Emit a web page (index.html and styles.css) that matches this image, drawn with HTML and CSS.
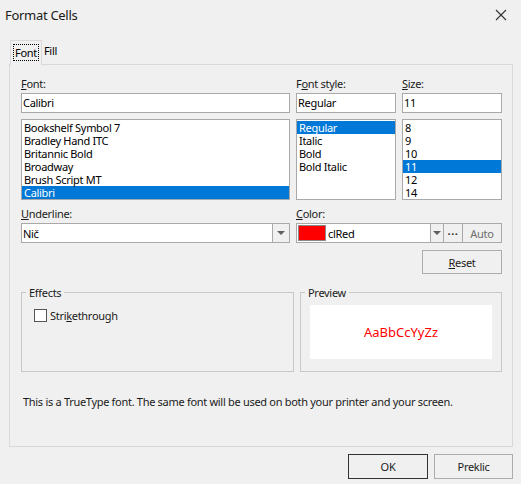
FILE: index.html
```html
<!DOCTYPE html>
<html lang="en">
  <head>
    <meta charset="UTF-8" />
    <meta name="viewport" content="width=device-width, initial-scale=1.0" />
    <title>Format Cells</title>
    <link rel="stylesheet" href="styles.css">
  </head>
  <body>
    <div class="window">
      <div class="titlebar">
        <span class="title">Format Cells</span>
        <svg class="close" width="12" height="12" viewBox="0 0 12 12">
          <path d="M1 1 L11 11 M11 1 L1 11" stroke="#333" stroke-width="1.1" fill="none" />
        </svg>
      </div>

      <div class="tabs">
        <div class="tab active"><span class="focus">Font</span></div>
        <div class="tab">Fill</div>
      </div>

      <div class="panel">
        <div class="fields">
          <div class="col">
            <label><u>F</u>ont:</label>
            <div class="edit">Calibri</div>
            <ul class="list">
              <li>Bookshelf Symbol 7</li>
              <li>Bradley Hand ITC</li>
              <li>Britannic Bold</li>
              <li>Broadway</li>
              <li>Brush Script MT</li>
              <li class="selected">Calibri</li>
            </ul>
          </div>

          <div class="col">
            <label>F<u>o</u>nt style:</label>
            <div class="edit">Regular</div>
            <ul class="list">
              <li class="selected">Regular</li>
              <li>Italic</li>
              <li>Bold</li>
              <li>Bold Italic</li>
            </ul>
          </div>

          <div class="col">
            <label><u>S</u>ize:</label>
            <div class="edit">11</div>
            <ul class="list">
              <li>8</li>
              <li>9</li>
              <li>10</li>
              <li class="selected">11</li>
              <li>12</li>
              <li>14</li>
            </ul>
          </div>

          <div class="col row2">
            <label><u>U</u>nderline:</label>
            <div class="combo">
              <span class="value">Nič</span>
              <span class="drop"><i class="arrow"></i></span>
            </div>
          </div>

          <div class="col row2 wide">
            <label><u>C</u>olor:</label>
            <div class="color-row">
              <div class="combo color">
                <span class="swatch"></span>
                <span class="value">clRed</span>
                <span class="drop"><i class="arrow"></i></span>
              </div>
              <button class="small dots">···</button>
              <button class="small auto">Auto</button>
            </div>
          </div>
        </div>

        <div class="reset-row">
          <button class="btn reset"><u>R</u>eset</button>
        </div>

        <div class="groups">
          <fieldset class="group effects">
            <legend>Effects</legend>
            <label class="check"><span class="box"></span>Stri<u>k</u>ethrough</label>
          </fieldset>
          <fieldset class="group preview">
            <legend>Preview</legend>
            <div class="sample">AaBbCcYyZz</div>
          </fieldset>
        </div>

        <p class="info">This is a TrueType font. The same font will be used on both your printer and your screen.</p>
      </div>

      <div class="footer">
        <button class="btn ok">OK</button>
        <button class="btn cancel">Preklic</button>
      </div>
    </div>
  </body>
</html>
```

FILE: styles.css
```css
body {
  margin: 0;
  padding: 0;
  background-color: #f0f0f0;
  font-family: "Segoe UI", "Noto Sans", sans-serif;
  font-size: 11px;
  letter-spacing: -0.3px;
  color: #000;
}

.window {
  width: 521px;
  height: 484px;
  display: flex;
  flex-direction: column;
}

.titlebar {
  height: 30px;
  display: flex;
  align-items: center;
  justify-content: space-between;
  padding: 0 14px 0 5px;
}

.titlebar .title {
  font-size: 13px;
  color: #1b1b1b;
}

.tabs {
  display: flex;
  margin: 10px 0 -1px 10px;
  height: 25px;
  position: relative;
  z-index: 1;
}

.tab {
  padding: 3px 2px 0 2px;
  line-height: 15px;
}

.tab.active {
  border: 1px solid #d9d9d9;
  border-bottom: none;
  background: #f0f0f0;
  padding: 3px 2px 0 2px;
}

.focus {
  display: inline-block;
  border: 1px dotted #000;
  padding: 0 1px;
}

.panel {
  margin: 0 8px 0 9px;
  height: 383px;
  box-sizing: border-box;
  border: 1px solid #d9d9d9;
  padding: 11px 10px 0 11px;
}

.fields {
  display: grid;
  grid-template-columns: 269px 100px 100px;
  column-gap: 6px;
}

.col {
  display: flex;
  flex-direction: column;
}

.col.row2 {
  margin-top: 6px;
}

.col.wide {
  grid-column: span 2;
}

label {
  line-height: 15px;
  margin-bottom: 2px;
  color: #1b1b1b;
}

.edit {
  height: 20px;
  box-sizing: border-box;
  border: 1px solid #a9a9a9;
  background: #fff;
  padding: 0 1px;
  line-height: 18px;
}

.list {
  list-style: none;
  margin: 6px 0 0 0;
  height: 81px;
  box-sizing: border-box;
  border: 1px solid #a9a9a9;
  background: #fff;
  padding: 1px 0 0 0;
  overflow: hidden;
}

.list li {
  height: 13px;
  line-height: 13px;
  padding-left: 2px;
}

.list li.selected {
  background: #0078d7;
  color: #fff;
}

.combo {
  height: 20px;
  box-sizing: border-box;
  border: 1px solid #a9a9a9;
  background: #fff;
  display: flex;
  align-items: center;
}

.combo .value {
  flex: 1;
  padding-left: 1px;
}

.combo .drop {
  width: 16px;
  height: 18px;
  border-left: 1px solid #a9a9a9;
  background: #f0f0f0;
  display: flex;
  align-items: center;
  justify-content: center;
}

.arrow {
  width: 0;
  height: 0;
  border-left: 4px solid transparent;
  border-right: 4px solid transparent;
  border-top: 4px solid #606060;
}

.color-row {
  display: flex;
}

.combo.color {
  width: 148px;
}

.combo.color .drop {
  width: 12px;
}

.swatch {
  width: 26px;
  height: 14px;
  border: 1px solid #8a8a8a;
  background: #ff0000;
  margin-left: 1px;
}

.combo.color .value {
  padding-left: 2px;
}

.small {
  height: 20px;
  box-sizing: border-box;
  border: 1px solid #a9a9a9;
  border-left: none;
  background: #f0f0f0;
  font-family: inherit;
  font-size: 11px;
  padding: 0;
}

.dots {
  width: 19px;
  color: #333;
  font-weight: bold;
  letter-spacing: 0.5px;
}

.auto {
  width: 39px;
  color: #6d6d6d;
  letter-spacing: -0.3px;
}

.reset-row {
  display: flex;
  justify-content: flex-end;
  margin-top: 7px;
}

.btn {
  height: 25px;
  box-sizing: border-box;
  border: 1px solid #adadad;
  background: #f0f0f0;
  font-family: inherit;
  font-size: 11px;
  letter-spacing: -0.3px;
  color: #1b1b1b;
  padding: 0;
}

.reset {
  width: 80px;
  height: 24px;
}

.groups {
  display: flex;
  gap: 6px;
  margin-top: 11px;
}

.group {
  margin: 0;
  padding: 0;
  border: 1px solid #c8c8c8;
  height: 87px;
  box-sizing: border-box;
}

.group legend {
  line-height: 15px;
  padding: 0 3px;
  margin-left: 4px;
  color: #1b1b1b;
}

.effects {
  width: 273px;
}

.check {
  display: flex;
  align-items: center;
  margin: 8px 0 0 12px;
}

.check .box {
  width: 11px;
  height: 11px;
  border: 1px solid #555;
  background: #fff;
  margin-right: 3px;
}

.preview {
  width: 202px;
}

.sample {
  height: 54px;
  margin: 5px 9px 0 9px;
  background: #fff;
  color: #ff0000;
  font-size: 13px;
  letter-spacing: 0;
  display: flex;
  align-items: center;
  justify-content: center;
}

.info {
  margin: 22px 0 0 2px;
  line-height: 15px;
  color: #1b1b1b;
}

.footer {
  display: flex;
  justify-content: flex-end;
  gap: 6px;
  margin: 7px 8px 0 0;
}

.ok {
  width: 80px;
  border-color: #333;
}

.cancel {
  width: 79px;
}
```
